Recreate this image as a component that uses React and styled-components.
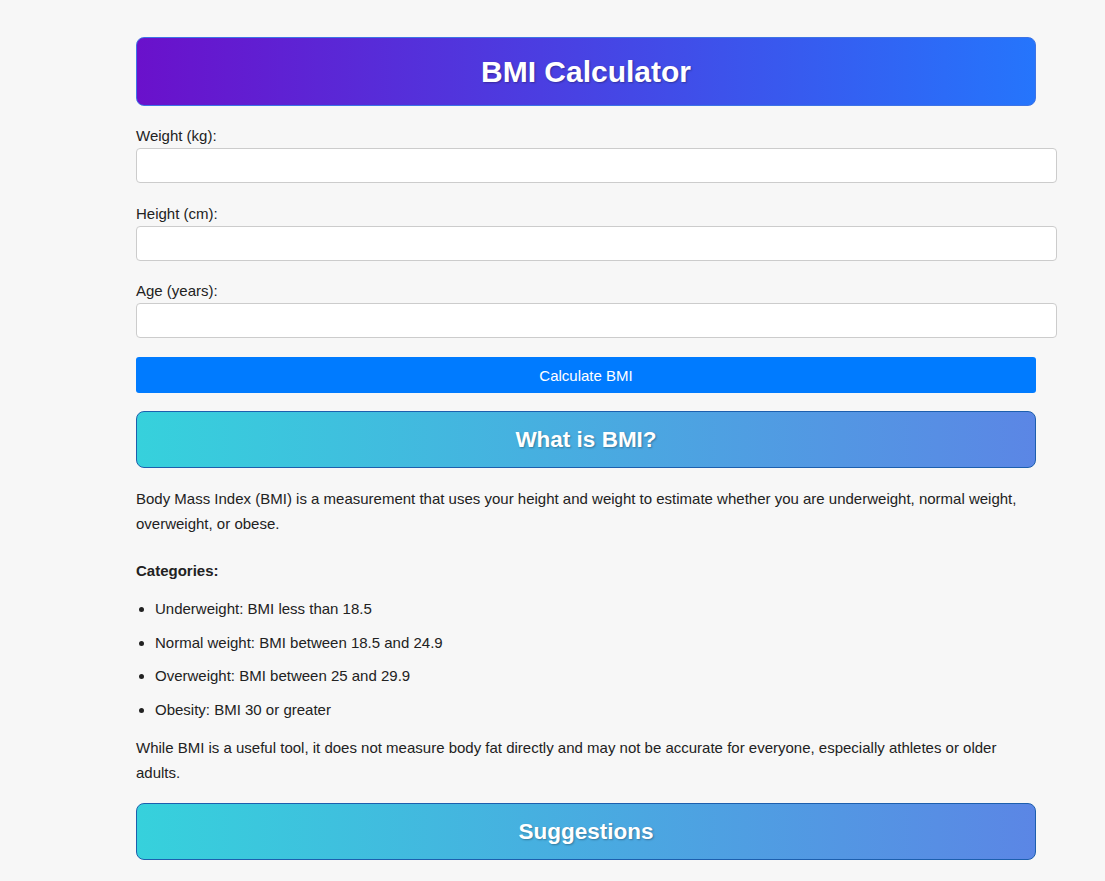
import React from "react";
import styled, { createGlobalStyle } from "styled-components";

const GlobalStyle = createGlobalStyle`
  body {
    margin: 0;
    background: #f7f7f7;
    font-family: "Liberation Sans", Arial, sans-serif;
    color: #222;
  }
`;

const Page = styled.div`
  padding: 37px 0 40px 136px;
`;

const Container = styled.div`
  width: 900px;
`;

const Banner = styled.h1`
  margin: 0 0 21px;
  padding: 16px 0;
  line-height: 35px;
  font-size: 30px;
  font-weight: bold;
  color: #fff;
  text-align: center;
  border: 1px solid #3d74e6;
  border-radius: 8px;
  background: linear-gradient(to right, #6a11cb, #2575fc);
  text-shadow: 1px 1px 2px rgba(0, 0, 0, 0.3);
`;

const SectionTitle = styled.h2`
  margin: 0 0 18px;
  padding: 15px 0;
  line-height: 25px;
  font-size: 22.5px;
  font-weight: bold;
  color: #fff;
  text-align: center;
  border: 1px solid #1d5fae;
  border-radius: 8px;
  background: linear-gradient(to right, #36d1dc, #5b86e5);
  text-shadow: 1px 1px 2px rgba(0, 0, 0, 0.3);
`;

const Field = styled.div`
  margin-bottom: ${(p) => p.$mb || "22px"};
`;

const Label = styled.label`
  display: block;
  font-size: 15px;
  line-height: 18px;
  margin-bottom: 3px;
`;

const Input = styled.input`
  display: block;
  width: 899px;
  height: 17px;
  padding: 8px 10px;
  border: 1px solid #ccc;
  border-radius: 4px;
  background: #fff;
  font-size: 15px;
  font-family: inherit;
`;

const Button = styled.button`
  display: block;
  width: 100%;
  height: 36px;
  margin-bottom: 18px;
  border: none;
  border-radius: 3px;
  background: #007bff;
  color: #fff;
  font-size: 15px;
  font-family: inherit;
  cursor: pointer;
`;

const Text = styled.p`
  margin: 0 0 ${(p) => p.$mb || "18px"};
  font-size: 15px;
  line-height: 25px;
`;

const List = styled.ul`
  margin: 0 0 13px;
  padding-left: 19px;
  font-size: 15px;
  line-height: 25px;
`;

const Item = styled.li`
  margin-bottom: 8.5px;
  &:last-child {
    margin-bottom: 0;
  }
`;

const categories = [
  "Underweight: BMI less than 18.5",
  "Normal weight: BMI between 18.5 and 24.9",
  "Overweight: BMI between 25 and 29.9",
  "Obesity: BMI 30 or greater",
];

const App = () => {
  return (
    <>
      <GlobalStyle />
      <Page>
        <Container>
          <Banner>BMI Calculator</Banner>
          <Field>
            <Label>Weight (kg):</Label>
            <Input type="number" />
          </Field>
          <Field $mb="21px">
            <Label>Height (cm):</Label>
            <Input type="number" />
          </Field>
          <Field $mb="19px">
            <Label>Age (years):</Label>
            <Input type="number" />
          </Field>
          <Button>Calculate BMI</Button>

          <SectionTitle>What is BMI?</SectionTitle>
          <Text $mb="22px">
            Body Mass Index (BMI) is a measurement that uses your height and
            weight to estimate whether you are underweight, normal weight,
            overweight, or obese.
          </Text>
          <Text $mb="13px">
            <strong>Categories:</strong>
          </Text>
          <List>
            {categories.map((c) => (
              <Item key={c}>{c}</Item>
            ))}
          </List>
          <Text $mb="18px">
            While BMI is a useful tool, it does not measure body fat directly
            and may not be accurate for everyone, especially athletes or older
            adults.
          </Text>

          <SectionTitle>Suggestions</SectionTitle>
        </Container>
      </Page>
    </>
  );
};

export default App;
